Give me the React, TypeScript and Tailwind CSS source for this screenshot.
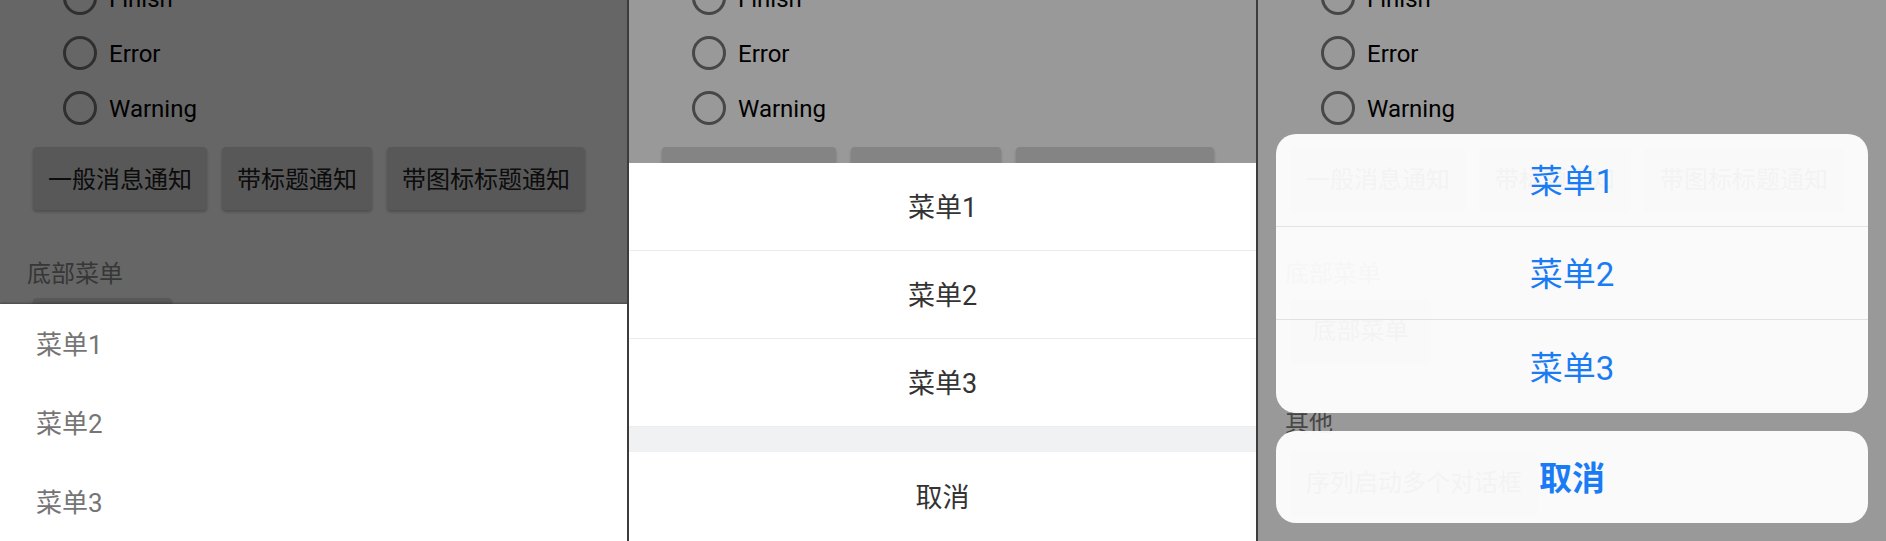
import React from 'react'

const FONT = 'font-[Roboto,"Noto_Sans_CJK_SC",sans-serif]'

const RADIOS = ['Finish', 'Error', 'Warning']
const NOTICE_BUTTONS = ['一般消息通知', '带标题通知', '带图标标题通知']
const MENU = ['菜单1', '菜单2', '菜单3']

function PageButton({ label }: { label: string }) {
  return (
    <div className="h-[63px] min-w-[139px] px-[15px] pt-[3px] flex items-center justify-center rounded-[4px] bg-[#dcdcdc] text-[24px] text-[#222] shadow-[0_2px_3px_rgba(0,0,0,0.25)]">
      {label}
    </div>
  )
}

// The demo page that sits behind every sheet
function DemoPage() {
  return (
    <div className="flex flex-col bg-white h-full">
      <div className="-mt-[30px]">
        {RADIOS.map((r) => (
          <div key={r} className="h-[55px] flex items-center pl-[63px] gap-[12px]">
            <span className="w-[34px] h-[34px] rounded-full border-[3px] border-[#777]" />
            <span className="text-[24px] text-black pt-[2px]">{r}</span>
          </div>
        ))}
      </div>
      <div className="flex gap-[15px] pl-[33px] mt-[12px]">
        {NOTICE_BUTTONS.map((b) => (
          <PageButton key={b} label={b} />
        ))}
      </div>
      <div className="h-[30px] mt-[47px] pl-[27px] pt-[3px] flex items-center text-[24px] text-[#8a8a8a]">底部菜单</div>
      <div className="flex pl-[33px] mt-[11px]">
        <PageButton label="底部菜单" />
      </div>
      <div className="h-[30px] mt-[45px] pl-[27px] pt-[3px] flex items-center text-[24px] text-[#777]">其他</div>
      <div className="flex pl-[33px] mt-[14px]">
        <PageButton label="序列启动多个对话框" />
      </div>
    </div>
  )
}

// Material style sheet
function MaterialSheet() {
  return (
    <div className="relative w-[627px] h-full overflow-hidden">
      <DemoPage />
      <div className="absolute inset-0 bg-black/60" />
      <div className="absolute left-0 right-0 bottom-0 top-[304px] bg-white shadow-[0_-1px_2px_rgba(0,0,0,0.3)]">
        {MENU.map((m) => (
          <div key={m} className="h-[79px] pt-[4px] flex items-center pl-[36px] text-[26px] text-[#757575]">
            {m}
          </div>
        ))}
      </div>
    </div>
  )
}

// Weixin style sheet
function WeuiSheet() {
  return (
    <div className="relative w-[627px] h-full overflow-hidden border-l-2 border-[#3c3c3c] box-content">
      <DemoPage />
      <div className="absolute inset-0 bg-black/40" />
      <div className="absolute left-0 right-0 bottom-0 top-[163px] bg-white flex flex-col">
        {MENU.map((m) => (
          <div
            key={m}
            className="h-[88px] pt-[4px] flex items-center justify-center border-b border-[#ececec] text-[27px] text-[#333]"
          >
            {m}
          </div>
        ))}
        <div className="h-[25px] bg-[#f0f1f3]" />
        <div className="flex-1 pt-[4px] flex items-center justify-center text-[27px] text-[#333]">取消</div>
      </div>
    </div>
  )
}

// iOS style sheet
function IosSheet() {
  return (
    <div className="relative flex-1 h-full overflow-hidden border-l-2 border-[#3c3c3c]">
      <DemoPage />
      <div className="absolute inset-0 bg-black/40 flex flex-col justify-end gap-[18px] px-[18px] pb-[18px]">
        <div className="rounded-[20px] bg-white/95 flex flex-col overflow-hidden">
          {MENU.map((m, i) => (
            <div
              key={m}
              className={`h-[93px] pt-[4px] flex items-center justify-center text-[33px] text-[#1a7cf5] ${
                i < MENU.length - 1 ? 'border-b border-[#e2e2e2]' : ''
              }`}
            >
              {m}
            </div>
          ))}
        </div>
        <div className="h-[92px] pt-[4px] rounded-[20px] bg-white/95 flex items-center justify-center text-[33px] font-bold text-[#1a7cf5]">
          取消
        </div>
      </div>
    </div>
  )
}

export default function App() {
  return (
    <div className={`flex w-[1886px] h-[541px] overflow-hidden bg-white ${FONT}`}>
      <MaterialSheet />
      <WeuiSheet />
      <IosSheet />
    </div>
  )
}
